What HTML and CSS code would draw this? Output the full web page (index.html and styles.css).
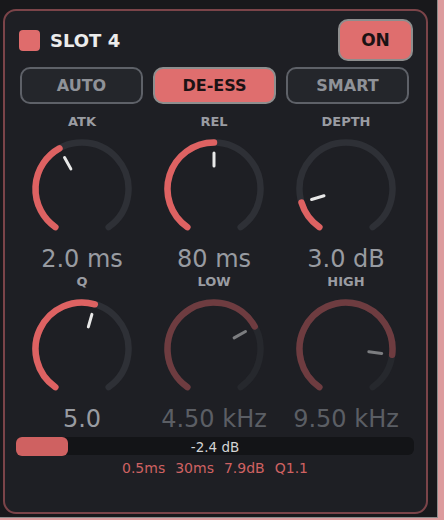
FILE: index.html
```html
<!DOCTYPE html>
<html lang="en">

<head>
  <meta charset="UTF-8">
  <meta name="viewport" content="width=device-width, initial-scale=1.0">
  <title>Slot 4</title>
  <link rel="stylesheet" href="styles.css">
</head>

<body>

  <div class="frame">
    <div class="card">

      <div class="header">
        <div class="title"><span class="led"></span>SLOT 4</div>
        <button class="power">ON</button>
      </div>

      <div class="modes">
        <button class="mode">AUTO</button>
        <button class="mode active">DE-ESS</button>
        <button class="mode">SMART</button>
      </div>

      <div class="knobs">
        <!-- row 1 -->
        <div class="knob">
          <div class="label">ATK</div>
          <svg viewBox="0 0 104 104" width="104" height="104">
            <path class="track" d="M25.33 90.09 A46.5 46.5 0 1 1 78.67 90.09" />
            <path class="value" d="M25.33 90.09 A46.5 46.5 0 0 1 29.46 11.33" />
            <line class="pointer" x1="40.85" y1="31.88" x2="34.55" y2="20.51" />
          </svg>
          <div class="readout">2.0 ms</div>
        </div>
        <div class="knob">
          <div class="label">REL</div>
          <svg viewBox="0 0 104 104" width="104" height="104">
            <path class="track" d="M25.33 90.09 A46.5 46.5 0 1 1 78.67 90.09" />
            <path class="value" d="M25.33 90.09 A46.5 46.5 0 0 1 52 5.5" />
            <line class="pointer" x1="52" y1="29" x2="52" y2="16" />
          </svg>
          <div class="readout">80 ms</div>
        </div>
        <div class="knob">
          <div class="label">DEPTH</div>
          <svg viewBox="0 0 104 104" width="104" height="104">
            <path class="track" d="M25.33 90.09 A46.5 46.5 0 1 1 78.67 90.09" />
            <path class="value" d="M25.33 90.09 A46.5 46.5 0 0 1 7.53 65.6" />
            <line class="pointer" x1="30" y1="58.73" x2="17.57" y2="62.53" />
          </svg>
          <div class="readout">3.0 dB</div>
        </div>

        <!-- row 2 -->
        <div class="knob">
          <div class="label">Q</div>
          <svg viewBox="0 0 104 104" width="104" height="104">
            <path class="track" d="M25.33 90.09 A46.5 46.5 0 1 1 78.67 90.09" />
            <path class="value" d="M25.33 90.09 A46.5 46.5 0 0 1 64.82 7.3" />
            <line class="pointer" x1="58.34" y1="29.89" x2="61.92" y2="17.39" />
          </svg>
          <div class="readout">5.0</div>
        </div>
        <div class="knob off">
          <div class="label">LOW</div>
          <svg viewBox="0 0 104 104" width="104" height="104">
            <path class="track" d="M25.33 90.09 A46.5 46.5 0 1 1 78.67 90.09" />
            <path class="value" d="M25.33 90.09 A46.5 46.5 0 1 1 92.67 29.46" />
            <line class="pointer" x1="72.12" y1="40.85" x2="83.49" y2="34.55" />
          </svg>
          <div class="readout">4.50 kHz</div>
        </div>
        <div class="knob off">
          <div class="label">HIGH</div>
          <svg viewBox="0 0 104 104" width="104" height="104">
            <path class="track" d="M25.33 90.09 A46.5 46.5 0 1 1 78.67 90.09" />
            <path class="value" d="M25.33 90.09 A46.5 46.5 0 1 1 98.15 57.67" />
            <line class="pointer" x1="74.83" y1="54.8" x2="87.73" y2="56.39" />
          </svg>
          <div class="readout">9.50 kHz</div>
        </div>
      </div>

      <div class="meter">
        <div class="fill" style="width: 52px"></div>
        <div class="meter-text">-2.4 dB</div>
      </div>

      <div class="stats">
        <span>0.5ms</span>
        <span>30ms</span>
        <span>7.9dB</span>
        <span>Q1.1</span>
      </div>

    </div>
  </div>

</body>

</html>
```

FILE: styles.css
```css
body {
  margin: 0;
  background-color: #dc9b9d;
  font-family: "DejaVu Sans", Verdana, sans-serif;
}

.frame {
  width: 437px;
  height: 517px;
  background-color: #18181b;
  border-right: 1px solid #8c8c8c;
  border-bottom: 1px solid #8c8c8c;
  box-shadow: 0 2px 0 #cfcfcf;
  overflow: hidden;
}

.card {
  box-sizing: border-box;
  width: 425px;
  height: 505px;
  margin: 9px 0 0 3px;
  padding: 8px 12px 0 11px;
  background-color: #1e1f24;
  border: 2px solid #7b4449;
  border-radius: 13px;
}

/* header */

.header {
  display: flex;
  align-items: center;
  justify-content: space-between;
  height: 42px;
  padding: 0 1px 0 3px;
}

.title {
  display: flex;
  align-items: center;
  gap: 10px;
  color: #ececec;
  font-size: 18px;
  font-weight: bold;
}

.led {
  width: 21px;
  height: 21px;
  border-radius: 4px;
  background-color: #df6c6c;
}

button {
  font-family: inherit;
  font-weight: bold;
  cursor: pointer;
}

.power {
  box-sizing: border-box;
  width: 75px;
  height: 42px;
  border: 2px solid #8e8e8e;
  border-radius: 10px;
  background-color: #df6e6e;
  color: #1c1214;
  font-size: 17px;
}

/* mode buttons */

.modes {
  display: grid;
  grid-template-columns: repeat(3, 1fr);
  gap: 10px;
  margin: 6px 5px 0 4px;
}

.mode {
  box-sizing: border-box;
  height: 37px;
  border: 2px solid #5e6168;
  border-radius: 10px;
  background-color: #24262b;
  color: #8f9298;
  font-size: 16px;
}

.mode.active {
  border-color: #8e8e8e;
  background-color: #df6e6e;
  color: #1c1214;
}

/* knobs */

.knobs {
  display: grid;
  grid-template-columns: repeat(3, 132px);
  row-gap: 1px;
  margin-top: 10px;
}

.knob {
  display: flex;
  flex-direction: column;
  align-items: center;
}

.label {
  height: 16px;
  line-height: 16px;
  font-size: 13px;
  font-weight: bold;
  color: #9a9ca2;
}

.knob svg {
  display: block;
  margin-top: 7px;
  fill: none;
  stroke-linecap: round;
}

.track {
  stroke: #2e3036;
  stroke-width: 6.5;
}

.value {
  stroke: #de6262;
  stroke-width: 6.5;
}

.pointer {
  stroke: #e8e8e8;
  stroke-width: 3;
}

.readout {
  margin-top: 4px;
  height: 28px;
  line-height: 28px;
  font-size: 24px;
  color: #989ba1;
  white-space: nowrap;
}

.knob.off .track {
  stroke: #26282d;
}

.knob.off .value {
  stroke: #6e3c40;
}

.knob.off .pointer {
  stroke: #7c7d80;
}

.knob.off .readout {
  color: #5b5e64;
}

/* meter */

.meter {
  display: grid;
  height: 18px;
  margin-top: 4px;
  border-radius: 6px;
  background-color: #131417;
}

.meter > * {
  grid-area: 1 / 1;
}

.fill {
  justify-self: start;
  border-radius: 6px;
  background-color: #cf6161;
}

.meter-text {
  justify-self: center;
  padding-top: 1px;
  line-height: 18px;
  font-size: 13.5px;
  color: #d4d4d4;
}

.stats {
  display: flex;
  justify-content: center;
  gap: 10px;
  margin-top: 4px;
  line-height: 18px;
  font-size: 14px;
  color: #cf6262;
}
```
